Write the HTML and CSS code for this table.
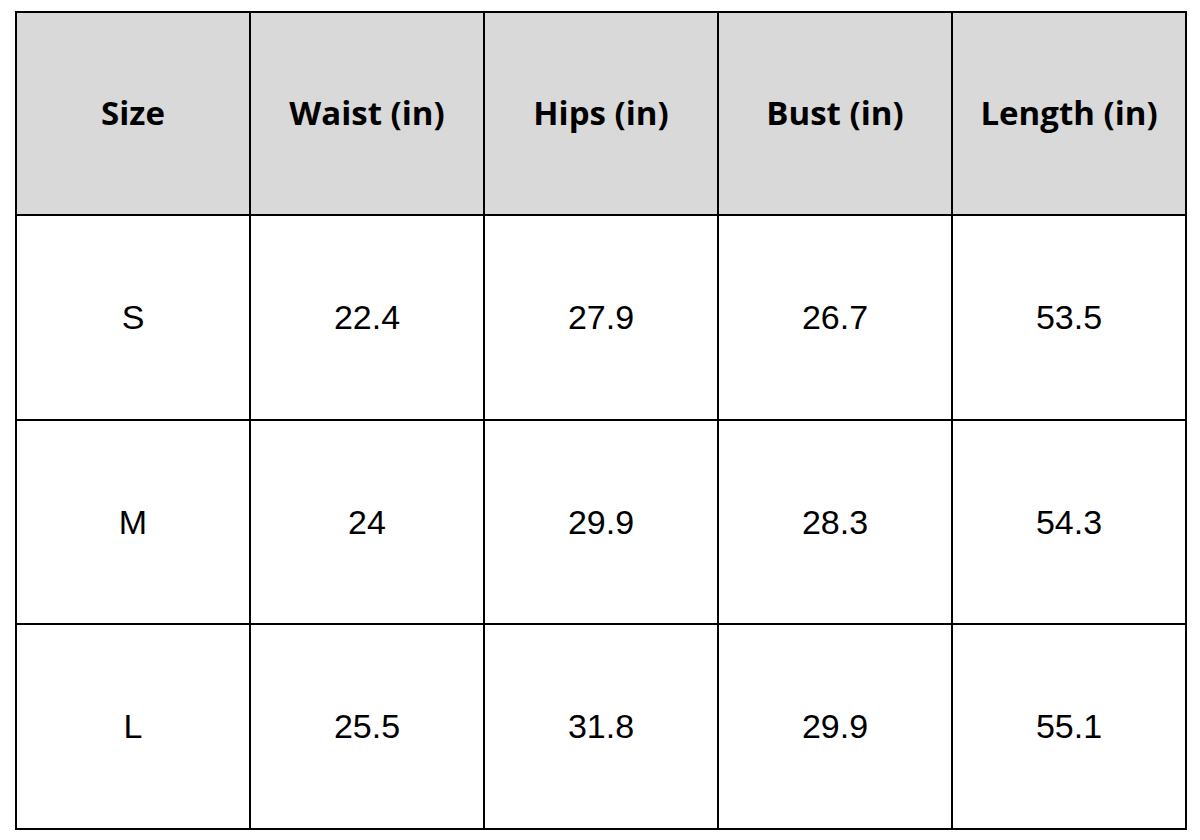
FILE: index.html
```html
<!DOCTYPE html>
<html>
<head>
<meta charset="utf-8">
<link rel="stylesheet" href="styles.css">
</head>
<body>
<div class="page">
<table class="size-table">
  <thead>
    <tr><th>Size</th><th>Waist (in)</th><th>Hips (in)</th><th>Bust (in)</th><th>Length (in)</th></tr>
  </thead>
  <tbody>
    <tr><td>S</td><td>22.4</td><td>27.9</td><td>26.7</td><td>53.5</td></tr>
    <tr class="mid"><td>M</td><td>24</td><td>29.9</td><td>28.3</td><td>54.3</td></tr>
    <tr><td>L</td><td>25.5</td><td>31.8</td><td>29.9</td><td>55.1</td></tr>
  </tbody>
</table>
</div>
</body>
</html>
```
FILE: styles.css
```css
html, body {
  margin: 0;
  padding: 0;
  background: #fff;
}
.page {
  padding: 11px 0 0 15px;
}
.size-table {
  border-collapse: collapse;
  table-layout: fixed;
  width: 1172px;
}
.size-table th,
.size-table td {
  border: 2px solid #000;
  text-align: center;
  vertical-align: middle;
  padding: 0;
  color: #000;
}
.size-table th {
  background: #d9d9d9;
  height: 198px;
  padding-bottom: 3px;
  font-family: "Open Sans", sans-serif;
  font-weight: 700;
  font-size: 33px;
}
.size-table td {
  height: 203px;
  font-family: "Liberation Sans", Arial, sans-serif;
  font-size: 34px;
}
.size-table .mid td {
  height: 202px;
}
```
